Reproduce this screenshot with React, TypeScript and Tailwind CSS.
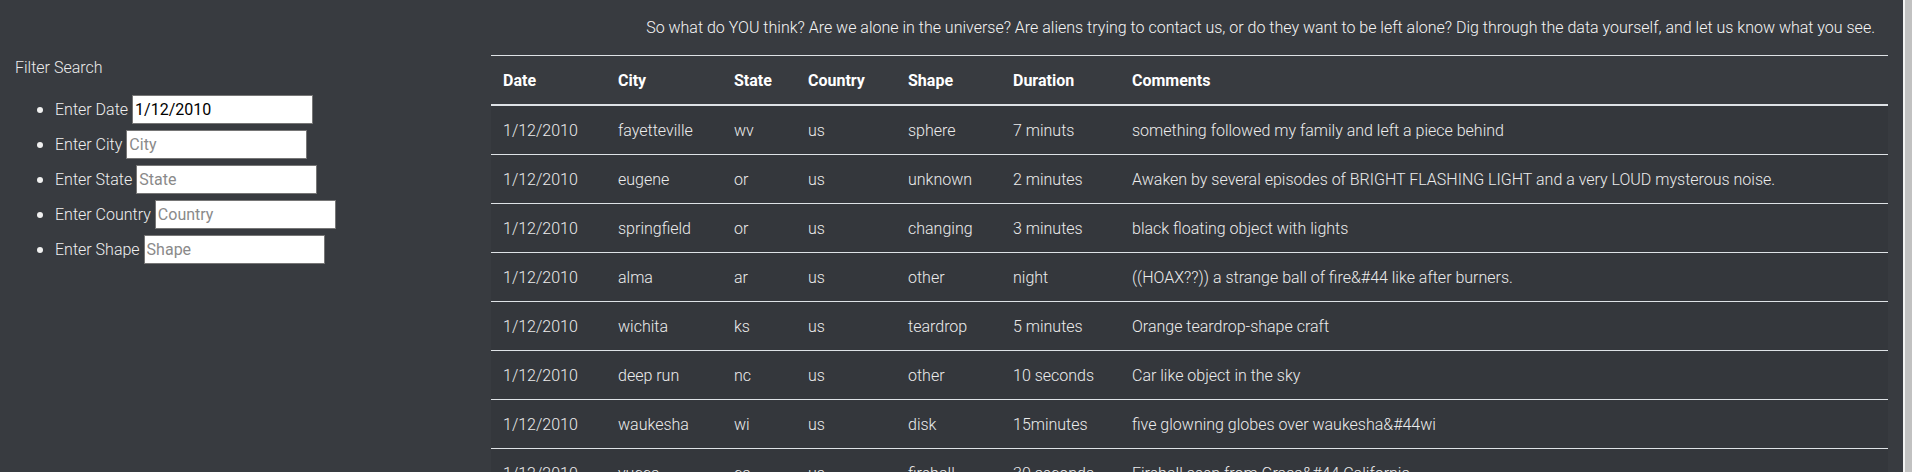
import React from "react";

type Row = {
  date: string;
  city: string;
  state: string;
  country: string;
  shape: string;
  duration: string;
  comments: string;
};

const rows: Row[] = [
  { date: "1/12/2010", city: "fayetteville", state: "wv", country: "us", shape: "sphere", duration: "7 minuts", comments: "something followed my family and left a piece behind" },
  { date: "1/12/2010", city: "eugene", state: "or", country: "us", shape: "unknown", duration: "2 minutes", comments: "Awaken by several episodes of BRIGHT FLASHING LIGHT and a very LOUD mysterous noise." },
  { date: "1/12/2010", city: "springfield", state: "or", country: "us", shape: "changing", duration: "3 minutes", comments: "black floating object with lights" },
  { date: "1/12/2010", city: "alma", state: "ar", country: "us", shape: "other", duration: "night", comments: "((HOAX??)) a strange ball of fire&#44 like after burners." },
  { date: "1/12/2010", city: "wichita", state: "ks", country: "us", shape: "teardrop", duration: "5 minutes", comments: "Orange teardrop-shape craft" },
  { date: "1/12/2010", city: "deep run", state: "nc", country: "us", shape: "other", duration: "10 seconds", comments: "Car like object in the sky" },
  { date: "1/12/2010", city: "waukesha", state: "wi", country: "us", shape: "disk", duration: "15minutes", comments: "five glowning globes over waukesha&#44wi" },
  { date: "1/12/2010", city: "yucca", state: "ca", country: "us", shape: "fireball", duration: "30 seconds", comments: "Fireball seen from Grass&#44 California" },
  { date: "1/12/2010", city: "sacramento", state: "ca", country: "us", shape: "light", duration: "2 minutes", comments: "bright light moving across the sky" },
];

const fields = [
  { label: "Enter Date", placeholder: "1/12/2010", value: "1/12/2010" },
  { label: "Enter City", placeholder: "City", value: "" },
  { label: "Enter State", placeholder: "State", value: "" },
  { label: "Enter Country", placeholder: "Country", value: "" },
  { label: "Enter Shape", placeholder: "Shape", value: "" },
];

const cell = "border-t border-[#dee2e6] px-3 pt-[13px] pb-[11px]";

export default function App() {
  return (
    <div
      className="flex h-screen w-full overflow-hidden bg-[#383b40] text-[16px] leading-6 text-[#ececec]"
      style={{ fontFamily: 'Roboto, "Noto Sans", Arial, sans-serif' }}
    >
      <aside className="w-[476px] shrink-0 px-[15px] pt-[56px] font-light">
        <div className="text-[#ececec]">Filter Search</div>
        <ul className="mt-[12px] pl-[22px]">
          {fields.map((f) => (
            <li key={f.label} className="flex h-[35px] items-center">
              <span className="mr-[12px] h-[6px] w-[6px] shrink-0 rounded-full bg-[#f0f0f0]" />
              <label className="whitespace-nowrap text-[#f0f0f0]">{f.label}</label>
              <input
                className="ml-[4px] h-[29px] w-[181px] border border-[#767676] bg-white px-[2px] text-[16px] font-normal text-black outline-none placeholder:text-[#8a8a8a]"
                placeholder={f.placeholder}
                defaultValue={f.value}
              />
            </li>
          ))}
        </ul>
      </aside>
      <main className="min-w-0 flex-1 px-[15px] pt-[16px]">
        <p className="mb-[15px] pr-[13px] text-right font-light text-[#f5f5f5]">
          So what do YOU think? Are we alone in the universe? Are aliens trying to contact us, or do they want to be left alone? Dig through the data yourself, and let us know what you see.
        </p>
        <table className="w-full table-fixed border-collapse text-left">
          <colgroup>
            <col className="w-[115px]" />
            <col className="w-[116px]" />
            <col className="w-[74px]" />
            <col className="w-[100px]" />
            <col className="w-[105px]" />
            <col className="w-[119px]" />
            <col />
          </colgroup>
          <thead>
            <tr>
              {["Date", "City", "State", "Country", "Shape", "Duration", "Comments"].map((h) => (
                <th
                  key={h}
                  className="border-t border-b-2 border-t-[#dee2e6] border-b-[#dee2e6] px-3 pt-[13px] pb-[11px] font-bold text-white"
                >
                  {h}
                </th>
              ))}
            </tr>
          </thead>
          <tbody>
            {rows.map((r, i) => (
              <tr key={i} className="bg-[#34373c] font-light">
                <td className={`${cell} whitespace-nowrap`}>{r.date}</td>
                <td className={`${cell} whitespace-nowrap`}>{r.city}</td>
                <td className={`${cell} whitespace-nowrap`}>{r.state}</td>
                <td className={`${cell} whitespace-nowrap`}>{r.country}</td>
                <td className={`${cell} whitespace-nowrap`}>{r.shape}</td>
                <td className={`${cell} whitespace-nowrap`}>{r.duration}</td>
                <td className={cell}>{r.comments}</td>
              </tr>
            ))}
          </tbody>
        </table>
      </main>
      <div className="w-[9px] shrink-0 border-l-2 border-[#f1f1f1] bg-[#c1c1c1]" />
    </div>
  );
}
